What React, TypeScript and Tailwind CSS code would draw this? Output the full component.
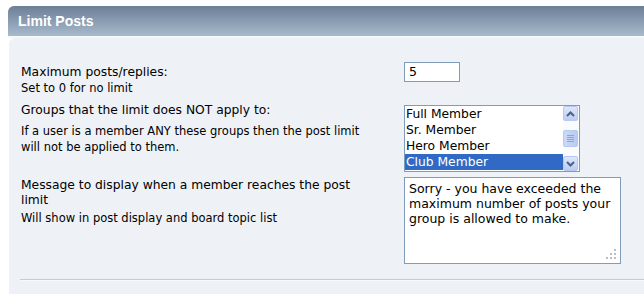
import React from 'react';

const font = { fontFamily: '"DejaVu Sans", Verdana, sans-serif' };

const groups = ['Full Member', 'Sr. Member', 'Hero Member', 'Club Member'];

function ScrollButton({ dir }: { dir: 'up' | 'down' }) {
  return (
    <div className="w-[15px] h-[15px] rounded-[2px] border border-[#b7c9ee] bg-gradient-to-b from-[#dde7fc] to-[#bccdf5] flex items-center justify-center">
      <svg width="9" height="6" viewBox="0 0 9 6">
        <path
          d={dir === 'up' ? 'M1 5 L4.5 1.5 L8 5' : 'M1 1 L4.5 4.5 L8 1'}
          fill="none"
          stroke="#4d6185"
          strokeWidth="2"
        />
      </svg>
    </div>
  );
}

function GroupList() {
  return (
    <div className="w-[176px] h-[67px] border border-[#7f9db9] bg-white flex">
      <div className="flex-1 flex flex-col text-[12.3px] leading-[16px] text-black">
        {groups.map((g, i) => (
          <div
            key={g}
            className={i === 3 ? 'bg-[#316ac5] text-white pl-[1px] h-[16px]' : 'pl-[1px] h-[16px]'}
          >
            {g}
          </div>
        ))}
      </div>
      <div className="w-[16px] bg-[#fafbfd] flex flex-col justify-between">
        <ScrollButton dir="up" />
        <div className="w-[15px] h-[17px] rounded-[2px] border border-[#b7c9ee] bg-gradient-to-r from-[#cbdaf9] to-[#b9cbf4] flex flex-col items-center justify-center gap-[1px]">
          <div className="w-[7px] h-[1px] bg-[#8ea4d8]" />
          <div className="w-[7px] h-[1px] bg-[#8ea4d8]" />
          <div className="w-[7px] h-[1px] bg-[#8ea4d8]" />
          <div className="w-[7px] h-[1px] bg-[#8ea4d8]" />
        </div>
        <ScrollButton dir="down" />
      </div>
    </div>
  );
}

export default function App() {
  return (
    <div className="w-[644px] h-[294px] overflow-hidden bg-white pt-[6px] pl-[8px]" style={font}>
      {/* Header */}
      <div className="h-[30px] rounded-tl-[6px] bg-gradient-to-b from-[#6d7f97] to-[#a7bbcc] flex items-center pl-[10px]">
        <span className="text-white font-bold text-[14px]" style={{ fontFamily: '"Liberation Sans", Arial, sans-serif' }}>
          Limit Posts
        </span>
      </div>
      <div className="h-[2px] bg-[#f4f8fb]" />

      {/* Body */}
      <div className="ml-[1px] h-[260px] rounded-tl-[6px] bg-[#eef2f6] pl-[12px] pt-[24px] text-black">
        <div className="grid grid-cols-[383px_1fr]">
          <div className="pt-[2px]">
            <div className="text-[12.3px] leading-[16px]">Maximum posts/replies:</div>
            <div className="text-[11.5px] leading-[16px]">Set to 0 for no limit</div>
          </div>
          <div>
            <div className="w-[56px] h-[20px] border border-[#7f9db9] bg-white text-[12.5px] leading-[18px] pl-[4px]">5</div>
          </div>
        </div>

        <div className="grid grid-cols-[383px_1fr] mt-[6px]">
          <div>
            <div className="text-[12.3px] leading-[16px]">Groups that the limit does NOT apply to:</div>
            <div className="text-[11.5px] leading-[16px] mt-[5px] w-[345px]">
              If a user is a member ANY these groups then the post limit will not be applied to them.
            </div>
          </div>
          <div className="pt-[3px]">
            <GroupList />
          </div>
        </div>

        <div className="grid grid-cols-[383px_1fr] mt-[5px]">
          <div className="pt-[1px]">
            <div className="text-[12.3px] leading-[15px] w-[345px]">
              Message to display when a member reaches the post limit
            </div>
            <div className="text-[11.5px] leading-[16px] mt-[2px]">Will show in post display and board topic list</div>
          </div>
          <div>
            <div className="relative w-[217px] h-[87px] border border-[#7f9db9] bg-white text-[12.5px] leading-[15px] pl-[4px] pt-[3px]">
              Sorry - you have exceeded the maximum number of posts your group is allowed to make.
              <svg className="absolute right-[4px] bottom-[4px]" width="10" height="10" viewBox="0 0 10 10">
                <rect x="8" y="0" width="2" height="2" fill="#b9bec4" />
                <rect x="4" y="4" width="2" height="2" fill="#b9bec4" />
                <rect x="8" y="4" width="2" height="2" fill="#b9bec4" />
                <rect x="0" y="8" width="2" height="2" fill="#b9bec4" />
                <rect x="4" y="8" width="2" height="2" fill="#b9bec4" />
                <rect x="8" y="8" width="2" height="2" fill="#b9bec4" />
              </svg>
            </div>
          </div>
        </div>

        <div className="mt-[15px] h-[1px] bg-[#c5ccd3] -ml-[1px]" />
        <div className="h-[1px] bg-[#f8fafc]" />
      </div>
    </div>
  );
}
